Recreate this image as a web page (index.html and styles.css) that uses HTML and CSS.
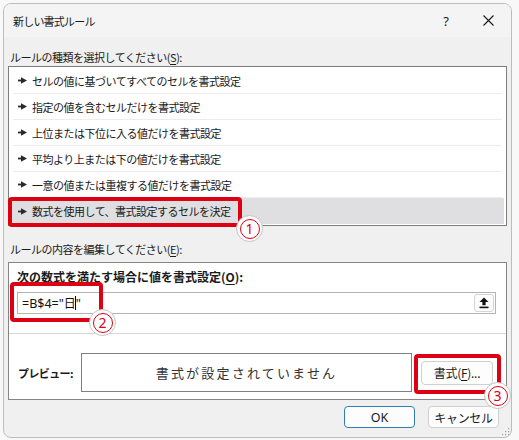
FILE: index.html
```html
<!DOCTYPE html>
<html lang="ja">
<head>
<meta charset="utf-8">
<title>新しい書式ルール</title>
<link rel="stylesheet" href="styles.css">
</head>
<body>
<div class="window">
  <div class="titlebar">
    <span class="title">新しい書式ルール</span>
    <span class="tb-spacer"></span>
    <span class="help">?</span>
    <span class="close"><svg width="11" height="11" viewBox="0 0 11 11"><path d="M0.5 0.5L10.5 10.5M10.5 0.5L0.5 10.5" stroke="#1a1a1a" stroke-width="1.1" fill="none"/></svg></span>
  </div>
  <div class="content">
    <div class="label label-top">ルールの種類を選択してください(<u>S</u>):</div>
    <div class="listbox">
      <div class="row"><svg class="tri" width="9" height="7" viewBox="0 0 9 7"><rect x="0" y="2.6" width="4" height="1.8" fill="#2a2a2a"/><path d="M3 0.2L9 3.5L3 6.8Z" fill="#2a2a2a"/></svg><span>セルの値に基づいてすべてのセルを書式設定</span></div>
      <div class="row"><svg class="tri" width="9" height="7" viewBox="0 0 9 7"><rect x="0" y="2.6" width="4" height="1.8" fill="#2a2a2a"/><path d="M3 0.2L9 3.5L3 6.8Z" fill="#2a2a2a"/></svg><span>指定の値を含むセルだけを書式設定</span></div>
      <div class="row"><svg class="tri" width="9" height="7" viewBox="0 0 9 7"><rect x="0" y="2.6" width="4" height="1.8" fill="#2a2a2a"/><path d="M3 0.2L9 3.5L3 6.8Z" fill="#2a2a2a"/></svg><span>上位または下位に入る値だけを書式設定</span></div>
      <div class="row"><svg class="tri" width="9" height="7" viewBox="0 0 9 7"><rect x="0" y="2.6" width="4" height="1.8" fill="#2a2a2a"/><path d="M3 0.2L9 3.5L3 6.8Z" fill="#2a2a2a"/></svg><span>平均より上または下の値だけを書式設定</span></div>
      <div class="row"><svg class="tri" width="9" height="7" viewBox="0 0 9 7"><rect x="0" y="2.6" width="4" height="1.8" fill="#2a2a2a"/><path d="M3 0.2L9 3.5L3 6.8Z" fill="#2a2a2a"/></svg><span>一意の値または重複する値だけを書式設定</span></div>
      <div class="row selected"><svg class="tri" width="9" height="7" viewBox="0 0 9 7"><rect x="0" y="2.6" width="4" height="1.8" fill="#2a2a2a"/><path d="M3 0.2L9 3.5L3 6.8Z" fill="#2a2a2a"/></svg><span>数式を使用して、書式設定するセルを決定</span></div>
    </div>
    <div class="label label-mid">ルールの内容を編集してください(<u>E</u>):</div>
    <div class="panel">
      <div class="bold-label">次の数式を満たす場合に値を書式設定(<u>O</u>):</div>
      <div class="formula">
        <span class="formula-text">=B$4="<span class="kanji">日</span><span class="caret"></span>"</span>
        <span class="collapse-btn"><svg width="10" height="12" viewBox="0 0 10 12"><path d="M5 0.5L9.5 5L6.6 5L6.6 8.2L3.4 8.2L3.4 5L0.5 5Z" fill="#111"/><rect x="0.5" y="9.6" width="9" height="1.6" fill="#111"/></svg></span>
      </div>
      <div class="separator"></div>
      <div class="preview-row">
        <div class="preview-label">プレビュー:</div>
        <div class="preview-box">書式が設定されていません</div>
        <div class="btn format-btn">書式(<u>F</u>)...</div>
      </div>
    </div>
    <div class="buttons">
      <div class="btn ok-btn">OK</div>
      <div class="btn cancel-btn">キャンセル</div>
    </div>
  </div>
  <svg class="grip" width="8" height="8" viewBox="0 0 8 8"><g fill="#a0a0a0"><rect x="6" y="0" width="1.2" height="1.2"/><rect x="3" y="3" width="1.2" height="1.2"/><rect x="6" y="3" width="1.2" height="1.2"/><rect x="0" y="6" width="1.2" height="1.2"/><rect x="3" y="6" width="1.2" height="1.2"/><rect x="6" y="6" width="1.2" height="1.2"/></g></svg>
</div>

<div class="mark mark1"></div>
<div class="num num1"><span>1</span></div>
<div class="mark mark2"></div>
<div class="num num2"><span>2</span></div>
<div class="mark mark3"></div>
<div class="num num3"><span>3</span></div>
</body>
</html>
```
FILE: styles.css
```css
* { box-sizing: border-box; }
html, body { margin: 0; padding: 0; }
body {
  width: 519px;
  height: 440px;
  background: #f8f8f8;
  font-family: "Noto Sans CJK JP", "Noto Sans", sans-serif;
  font-size: 11px;
  letter-spacing: -0.5px;
  color: #1a1a1a;
  position: relative;
  overflow: hidden;
  padding: 3px 0 0 3px;
}
u { text-decoration: underline; text-underline-offset: 2px; }

.window {
  width: 509px;
  height: 435px;
  border: 1px solid #bdbdbd;
  border-radius: 8px;
  background: #f0f0f0;
  overflow: hidden;
  position: relative;
  display: flex;
  flex-direction: column;
}

.titlebar {
  height: 33px;
  background: #f4f4f4;
  display: flex;
  align-items: center;
  padding-left: 9px;
  flex: none;
}
.title { font-size: 11px; letter-spacing: -0.8px; }
.tb-spacer { flex: 1; }
.help { font-size: 13px; width: 14px; text-align: center; margin-right: 30px; font-family: "Noto Sans", sans-serif; letter-spacing: 0; }
.close { width: 11px; height: 11px; display: flex; margin-right: 17px; }

.content {
  padding: 0 4px 0 4px;
  display: flex;
  flex-direction: column;
}

.label { line-height: 16px; height: 16px; padding-left: 2px; }
.label-top { margin-top: 12px; }
.label-mid { margin-top: 15px; }

.listbox {
  margin-top: 1px;
  height: 160px;
  border: 1px solid #7d7d7d;
  background: #fff;
  padding: 1px 2px 0 2px;
}
.row {
  height: 26px;
  border-bottom: 1px solid #ececec;
  display: flex;
  align-items: center;
  padding-left: 5px;
  margin: 0 2px;
}
.row .tri { flex: none; margin-right: 5px; }
.row.selected {
  background: #dfdfe2;
  border-bottom: none;
  margin: 0;
  padding-left: 7px;
}

.panel {
  margin-top: 5px;
  height: 138px;
  border: 1px solid #858585;
  background: #fff;
  padding-top: 6px;
  display: flex;
  flex-direction: column;
}
.bold-label {
  font-weight: bold;
  font-size: 12px;
  letter-spacing: 0;
  line-height: 16px;
  margin-left: 8px;
}
.formula {
  margin: 7px 10px 0 8px;
  height: 22px;
  border: 1px solid #b4b4b4;
  display: flex;
  align-items: center;
  padding-left: 4px;
  padding-right: 1px;
}
.formula-text {
  flex: 1;
  font-size: 12.5px;
  font-family: "Noto Sans", sans-serif;
  color: #111;
  letter-spacing: 0;
}
.formula-text .kanji {
  font-family: "Noto Sans CJK JP", sans-serif;
  font-size: 12px;
}
.formula-text .caret {
  display: inline-block;
  width: 1px;
  height: 14px;
  background: #000;
  vertical-align: -2px;
  margin: 0 0 0 -1px;
}
.collapse-btn {
  width: 20px;
  height: 18px;
  border: 1px solid #d4d4d4;
  border-radius: 3px;
  background: #fcfcfc;
  display: flex;
  align-items: center;
  justify-content: center;
}
.separator {
  margin-top: 19px;
  height: 1px;
  background: #d6d6d6;
}
.preview-row {
  margin-top: 19px;
  display: flex;
  align-items: center;
  padding-left: 9px;
}
.preview-label {
  width: 63px;
  font-weight: bold;
  font-size: 11px;
  letter-spacing: -0.6px;
}
.preview-box {
  width: 331px;
  height: 39px;
  border: 1px solid #808080;
  display: flex;
  align-items: center;
  justify-content: center;
  font-size: 13px;
  letter-spacing: 2.2px;
  color: #333;
}

.btn {
  height: 24px;
  border: 1px solid #d0d0d0;
  border-radius: 4px;
  background: #fdfdfd;
  display: flex;
  align-items: center;
  justify-content: center;
  font-size: 12px;
  letter-spacing: -0.3px;
}
.format-btn { width: 72px; margin-left: 9px; }

.buttons {
  display: flex;
  justify-content: flex-end;
  gap: 13px;
  margin-top: 6px;
  padding-right: 8px;
}
.ok-btn, .cancel-btn { width: 71px; height: 22px; }
.ok-btn { border-color: #2f7fb5; font-family: "Noto Sans", sans-serif; font-size: 12.5px; letter-spacing: 0; }

.grip { position: absolute; right: 1px; bottom: 1px; }

/* annotations */
.mark {
  position: absolute;
  border: 4px solid #dc0012;
  border-radius: 4px;
}
.mark1 { left: 8px; top: 197px; width: 234px; height: 30px; }
.mark2 { left: 10px; top: 282px; width: 93px; height: 40px; }
.mark3 { left: 414px; top: 354px; width: 87px; height: 40px; }

.num {
  position: absolute;
  width: 27px;
  height: 27px;
  border-radius: 50%;
  background: #fff;
  border: 1px solid #c4c4c4;
  display: flex;
  align-items: center;
  justify-content: center;
}
.num span {
  width: 20px;
  height: 20px;
  border-radius: 50%;
  border: 1.3px solid #dc0012;
  color: #dc0012;
  display: flex;
  align-items: center;
  justify-content: center;
  font-family: "Noto Sans", sans-serif;
  font-size: 14px;
  line-height: 1;
  letter-spacing: 0;
}
.num1 { left: 236px; top: 215px; }
.num2 { left: 89px; top: 309px; }
.num3 { left: 484px; top: 382px; }
```
